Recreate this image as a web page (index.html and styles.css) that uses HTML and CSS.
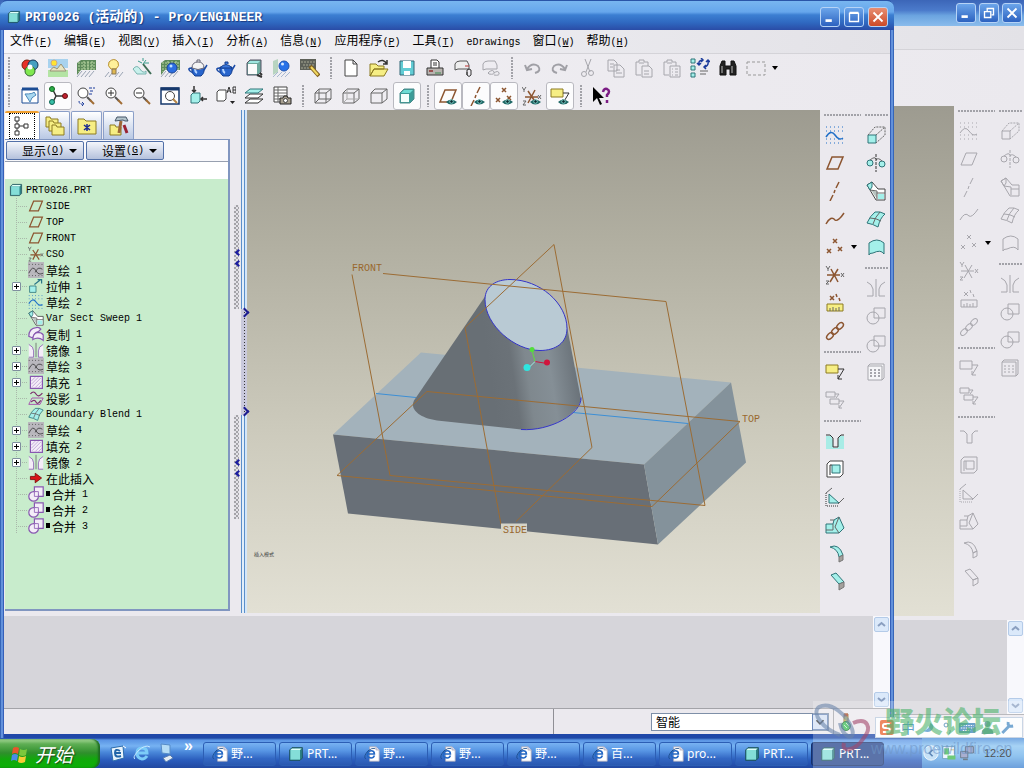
FILE: index.html
```html
<!DOCTYPE html>
<html lang="zh-CN">
<head>
  <meta charset="UTF-8">
  <title>PRT0026 (活动的) - Pro/ENGINEER</title>
  <link rel="stylesheet" href="styles.css">
</head>
<body>
  <div class="desktop">

    <section class="window back">
      <header class="titlebar">
        <button class="winbtn" aria-label="最小化"><svg viewBox="0 0 20 20"><path d="M5 14h7" stroke-width="3"/></svg></button>
        <button class="winbtn" aria-label="还原"><svg viewBox="0 0 20 20"><path d="M8 8V5h7v7h-2M5 8.500h7V15H5z" stroke-width="1.500"/></svg></button>
        <button class="winbtn" aria-label="关闭"><svg viewBox="0 0 20 20"><path d="M5 5l10 10M15 5L5 15" stroke-width="2"/></svg></button>
      </header>
      <div class="menubar"></div>
      <div class="toolbars"></div>
      <div class="main">
        <div class="canvas"></div>
        <div class="sidetools off" data-tools></div>
      </div>
      <div class="message"><div class="vscroll" data-scroll></div></div>
      <div class="status"></div>
    </section>

    <section class="window front">
      <header class="titlebar">
        <span class="appicon" data-icon="part"></span>
        <h1>PRT0026 (<span class="zh">活动的</span>) - Pro/ENGINEER</h1>
        <button class="winbtn" aria-label="最小化"><svg viewBox="0 0 20 20"><path d="M5 14h7" stroke-width="3"/></svg></button>
        <button class="winbtn" aria-label="最大化"><svg viewBox="0 0 20 20"><path d="M5 6h10v9H5z M5 5h10" stroke-width="1.500"/></svg></button>
        <button class="winbtn close" aria-label="关闭"><svg viewBox="0 0 20 20"><path d="M5 5l10 10M15 5L5 15" stroke-width="2"/></svg></button>
      </header>

      <nav class="menubar">
        <button>文件<span class="en">(<u>F</u>)</span></button>
        <button>编辑<span class="en">(<u>E</u>)</span></button>
        <button>视图<span class="en">(<u>V</u>)</span></button>
        <button>插入<span class="en">(<u>I</u>)</span></button>
        <button>分析<span class="en">(<u>A</u>)</span></button>
        <button>信息<span class="en">(<u>N</u>)</span></button>
        <button>应用程序<span class="en">(<u>P</u>)</span></button>
        <button>工具<span class="en">(<u>T</u>)</span></button>
        <button><span class="en">eDrawings</span></button>
        <button>窗口<span class="en">(<u>W</u>)</span></button>
        <button>帮助<span class="en">(<u>H</u>)</span></button>
      </nav>

      <div class="toolbars">
        <div class="toolrow" id="row1"></div>
        <div class="toolrow" id="row2"></div>
      </div>

      <div class="main">
        <aside class="sidebar">
          <div class="tabs">
            <button class="tab active" aria-label="模型树" data-icon="tree"></button>
            <button class="tab" aria-label="文件夹浏览器" data-icon="folders"></button>
            <button class="tab" aria-label="收藏夹" data-icon="favorite"></button>
            <button class="tab" aria-label="连接" data-icon="hammer"></button>
          </div>
          <div class="panel">
            <div class="panelbar">
              <button class="drop">显示<span class="en">(<u>O</u>)</span><span class="caret"></span></button>
              <button class="drop">设置<span class="en">(<u>G</u>)</span><span class="caret"></span></button>
            </div>
            <div class="treehead"></div>
            <ul class="tree" id="tree"></ul>
          </div>
        </aside>
        <div class="gutter">
          <div class="sash"><span></span><span></span></div>
          <div class="sash"><span></span><span></span></div>
        </div>
        <div class="splitter"><div class="handle"></div></div>

        <div class="canvas">
          <svg class="model" viewBox="247 110 573 502">
            <defs>
              <linearGradient id="side" gradientUnits="userSpaceOnUse" x1="490" y1="375" x2="578" y2="362">
                <stop offset="0" stop-color="#686f75"/>
                <stop offset=".26" stop-color="#6b7278"/>
                <stop offset=".42" stop-color="#7f888e"/>
                <stop offset=".68" stop-color="#858f96"/>
                <stop offset="1" stop-color="#687077"/>
              </linearGradient>
            </defs>
            <path fill="#a3b2bb" d="M333 434L421 352L731 382L644 464z"/>
            <path fill="#686f77" d="M333 434L644 464L658 544L348 513z"/>
            <path fill="#84929b" d="M644 464L731 382L746 462L658 544z"/>
            <path class="edge" d="M376 393L416 397M573 412L688 423"/>
            <path fill="url(#side)" d="M485 296L414 400C409 410 422 418 437 420L521 429C548 431 577 415 581 399L567 326z"/>
            <path class="loop" fill="#b9cad4" d="M485 299C485 285 497 279 510 279C540 279 567 303 567 328C567 342 556 350 540 350C515 350 485 325 485 299z"/>
            <path class="loop" fill="none" d="M521 429C550 431 582 413 581 397"/>
            <path class="datum" d="M383 273L666 301L705 505L390 475L352 274"/>
            <path class="datum" d="M501 524L465 327L554 244L592 447L516 521"/>
            <path class="datum" d="M337 475L427 391L740 421L652 506z"/>
            <path stroke="#5fdc3c" d="M535 361L532 350"/>
            <path stroke="#c8143c" d="M535 361L547 363"/>
            <path stroke="#9ff0e8" d="M535 361L528 368"/>
            <circle cx="532" cy="349" r="2.500" fill="#52dd3c"/>
            <circle cx="547" cy="362" r="3" fill="#d0143c"/>
            <circle cx="527" cy="367" r="3.500" fill="#2ee6e0"/>
            <path fill="#d6d4c8" d="M501 523h26v11h-26z"/>
            <text x="352" y="270">FRONT</text>
            <text x="742" y="421">TOP</text>
            <text x="503" y="532">SIDE</text>
            <text class="mode" x="254" y="555">插入模式</text>
          </svg>
        </div>
        <div class="sidetools" data-tools></div>
      </div>

      <div class="message"><div class="vscroll" data-scroll></div></div>

      <footer class="status">
        <div class="pane grow"></div>
        <div class="pane"></div>
        <div class="combo">
          <select aria-label="过滤器"><option>智能</option></select>
          <svg viewBox="0 0 16 16"><path d="M4 6l4 4l4-4"/></svg>
        </div>
        <div class="light" data-icon="light"></div>
      </footer>
    </section>

    <div class="ime">
      <svg viewBox="0 0 148 20">
        <rect x="4" y="2" width="14" height="15" rx="2" fill="#e8602c"/>
        <path d="M14 6H9q-2 0-2 2t2 2h3q2 0 2 2t-2 2H7" fill="none" stroke="#fff" stroke-width="2"/>
        <path d="M55 5q-1 7-7 8q7 3 10-3q1-3-3-5" fill="#4b94c9"/>
        <circle cx="71" cy="7" r="2" fill="none" stroke="#3d7fae"/><path d="M75 12q1 2-1 4" fill="none" stroke="#3d7fae"/>
        <rect x="84" y="5" width="17" height="10" rx="1" fill="#3b83b8"/>
        <path d="M86 7.500h13M86 10h13M88 12.500h8" stroke="#fff" stroke-dasharray="1.500 1"/>
        <circle cx="113" cy="6" r="3" fill="#4c8c93"/><path d="M107 16q0-6 6-6t6 6z" fill="#4c8c93"/>
        <path d="M128 15l7-7M134 4q-1 5 5 4" stroke="#4b8cc4" stroke-width="3" fill="none"/>
      </svg>
      <span>中</span>
    </div>
  </div>

  <div class="taskbar">
    <button class="start"><span data-icon="flag"></span>开始</button>
    <div class="quick">
      <button aria-label="Outlook Express" data-icon="mail"></button>
      <button aria-label="Internet Explorer" data-icon="ie"></button>
      <button aria-label="显示桌面" data-icon="desk"></button>
      <button class="more" aria-label="更多">»</button>
    </div>
    <div class="tasks" id="tasks"></div>
    <div class="tray">
      <button aria-label="隐藏图标" data-icon="hide"></button>
      <span data-icon="traygreen"></span>
      <span data-icon="traynet"></span>
      <time>12:20</time>
    </div>
  </div>

  <div class="watermark">
    <svg viewBox="0 0 60 60">
      <path d="M27 34C10 28-2 12 6 6C18 0 34 14 39 28C43 40 30 38 27 22" stroke="#6c86ac"/>
      <path d="M40 22C54 16 60 26 50 38C42 50 28 52 31 42" stroke="#a3476c"/>
    </svg>
    <div class="words"><b>野火论坛</b><span>www.proewildfire.cn</span></div>
  </div>

  <script src="script.js"></script>
</body>
</html>
```

FILE: styles.css
```css
:root {
  --cjk: "Noto Sans CJK SC", sans-serif;
  --mono: "Liberation Mono", "Noto Sans CJK SC", monospace;
  --face: #ebe9ee;
  --msg: #d6d5da;
}
* { box-sizing: border-box; }
html, body {
  margin: 0;
  height: 100%;
  overflow: hidden;
  font-family: var(--cjk);
  font-size: 12px;
  color: #000;
}
body {
  display: flex;
  flex-direction: column;
  position: relative;
}
button {
  border: 0;
  padding: 0;
  margin: 0;
  background: none;
  font: inherit;
  color: inherit;
}
svg { display: block; }
.en {
  font-family: var(--mono);
  font-size: 10px;
}

/* windows */
.desktop {
  flex: 1;
  position: relative;
  min-height: 0;
}
.window {
  position: absolute;
  display: flex;
  flex-direction: column;
  background: var(--face);
}
.window.back { inset: 0; }
.window.front {
  inset: 0 130px 0 0;
  padding: 0 4px 4px;
  border-radius: 7px 7px 0 0;
  background: linear-gradient(90deg, #2150a8, #78a8ec 2px, #1f48a8 4px, #1f48a8 calc(100% - 4px), #78a8ec calc(100% - 2px), #2150a8);
}
.titlebar {
  display: flex;
  align-items: center;
  gap: 4px;
  height: 30px;
  flex: none;
}
.front .titlebar {
  margin: 0 -4px;
  padding: 2px 6px 0 7px;
  border-top: 1px solid #2a55a8;
  border-radius: 7px 7px 0 0;
  background: linear-gradient(#78b6f0, #66a6ec 38%, #3c7fd2 48%, #2f68c0 75%, #2a4ca6);
}
.back .titlebar {
  height: 26px;
  padding: 0 2px 0 0;
  gap: 3px;
  justify-content: flex-end;
  background: linear-gradient(#3c66b8, #4b7bcb 40%, #6ba4e0 60%, #8abcec);
}
.titlebar h1 {
  flex: 1;
  margin: 0;
  font: bold 13px/20px var(--mono);
  color: #fff;
  text-shadow: 1px 1px 1px #1b3a80;
  white-space: pre;
}
.titlebar .zh { font: bold 14px/20px var(--cjk); }
.appicon svg { width: 14px; height: 14px; }
.winbtn {
  width: 20px;
  height: 20px;
  border: 1px solid #b6d3f6;
  border-radius: 3px;
  background: linear-gradient(#6ba5ea, #2c62c0);
}
.winbtn svg {
  width: 18px;
  height: 18px;
  fill: none;
  stroke: #fff;
}
.winbtn.close { background: linear-gradient(#e88e72, #cc4a28); }

.menubar {
  display: flex;
  height: 24px;
  flex: none;
  background: linear-gradient(90deg, #f6f6fa, #e3e2e7);
  border-bottom: 1px solid #d4d3d8;
}
.menubar button {
  padding: 0 6px;
  line-height: 20px;
  height: 20px;
}
.toolbars {
  height: 56px;
  flex: none;
  background: linear-gradient(90deg, #f1f0f4, var(--face));
}
.toolrow {
  display: flex;
  height: 28px;
}
.toolrow > .grip {
  width: 13px;
  margin: 3px 0;
  padding: 0 5px;
  background: repeating-linear-gradient(#a2a2a8 0 2px, transparent 2px 3px) center / 2px 100% no-repeat content-box;
}
.toolrow > .grip:first-child { width: 12px; padding: 0 6px 0 3px; }
.tool {
  display: flex;
  align-items: center;
  justify-content: center;
  width: 28px;
  height: 28px;
  flex: none;
}
.tool.on {
  background: #fcfcfd;
  border: 1px solid #b9b9c0;
  border-radius: 3px;
}
.caret {
  display: inline-block;
  border: 3px solid transparent;
  border-top: 4px solid #000;
  border-bottom: 0;
}
.toolrow > .caret { align-self: center; margin-left: 2px; }

/* icons */
.ico {
  width: 20px;
  height: 20px;
  fill: none;
  stroke: #666;
}
.ico .k { stroke: #333; }
.ico .g { stroke: #a6a6ac; }
.ico .b { stroke: #8c5530; stroke-width: 1.500; }
.ico .c { fill: #a4f0ea; stroke: #2f7478; }
.ico .y { fill: #f6ee84; stroke: #8c7a22; }
.ico .w { fill: #fff; stroke: #444; }
.ico .u { stroke: #1f6fc8; stroke-width: 1.500; }
.ico .p { stroke: #8858b0; fill: #f4edf8; }
.ico .f { stroke: none; }
.off .ico * {
  stroke: #a8a7ad;
  stroke-width: 1;
  fill: none;
}
.off .ico .f { stroke: none; }

/* main area */
.main {
  flex: 1;
  display: flex;
  min-height: 0;
  padding-bottom: 3px;
  background: var(--face);
}
.canvas {
  flex: 1;
  min-width: 0;
  background: linear-gradient(#9d9b90, #b0aea0 25%, #cdcbbd 65%, #e2e0d4);
}
.model {
  width: 100%;
  height: 100%;
}
.model .datum {
  fill: none;
  stroke: #9c6c34;
}
.model .edge { stroke: #3c8fd6; }
.model .loop { stroke: #3434c8; }
.model text {
  font: 10px var(--mono);
  fill: #99682e;
}
.model .mode { font: 5px var(--cjk); fill: #444; }

.sidetools {
  display: flex;
  width: 70px;
  flex: none;
  padding-left: 1px;
}
.sidetools .col {
  display: flex;
  flex-direction: column;
}
.sidetools .col:first-child { width: 41px; }
.sidetools .grip {
  height: 13px;
  margin: 0 1px 0 3px;
  padding: 6px 0 5px;
  background: repeating-linear-gradient(90deg, #a2a2a8 0 2px, transparent 2px 3px) content-box;
}
.sidetools .grip:first-child { height: 11px; padding: 4px 0 5px; }
.sidetools .cell {
  display: flex;
  align-items: center;
  height: 28px;
}
.sidetools .cell .caret { margin-left: 2px; }

/* sidebar */
.sidebar {
  display: flex;
  flex-direction: column;
  width: 226px;
  padding: 1px 0 2px 1px;
}
.tabs {
  display: flex;
  height: 28px;
}
.tab {
  display: flex;
  align-items: center;
  justify-content: center;
  width: 31px;
  margin-right: 1px;
  border: 1px solid #8b9fc8;
  border-bottom: 0;
  border-radius: 2px 2px 0 0;
  background: linear-gradient(#fff, #b9c8e4);
}
.tab.active {
  width: 34px;
  margin: 0;
  border: 0;
  border-top: 2px solid #f0a030;
  background: #fff;
}
.tab.active .ico { width: 24px; height: 24px; padding: 2px; outline: 1px dotted #000; }
.panel {
  display: flex;
  flex-direction: column;
  flex: 1;
  border: 1px solid #8196c0;
  border-width: 1px 2px 2px 0;
  background: #c8eccc;
}
.panelbar {
  display: flex;
  gap: 2px;
  height: 22px;
  padding: 1px;
  background: #f8f8fb;
  border-bottom: 1px solid #98a0b0;
}
.drop {
  display: flex;
  align-items: center;
  justify-content: flex-end;
  width: 78px;
  height: 19px;
  padding-right: 6px;
  border: 1px solid #5270a8;
  border-radius: 2px;
  background: linear-gradient(#f4f6fb, #b4c1dc);
}
.drop .caret { margin-left: 5px; border-width: 4px 4px 0; }
.treehead {
  height: 17px;
  background: #fff;
}
.tree {
  list-style: none;
  margin: 0;
  padding: 3px 0 0 4px;
}
.tree li {
  display: flex;
  align-items: center;
  height: 16px;
  line-height: 15px;
  white-space: pre;
}
.tree .en { padding-top: 1px; }
.tree .ico { width: 16px; height: 16px; margin-right: 2px; }
.tree .root .ico { width: 14px; height: 14px; margin-right: 3px; }
.branch {
  display: flex;
  align-items: center;
  width: 19px;
  height: 16px;
  padding-left: 3px;
  background:
    repeating-linear-gradient(#a9b8aa 0 1px, transparent 1px 2px) 7px 0 / 1px 100% no-repeat,
    repeating-linear-gradient(90deg, #a9b8aa 0 1px, transparent 1px 2px) 7px 8px / 11px 1px no-repeat;
}
.plus {
  width: 9px;
  height: 9px;
  border: 1px solid #7f8f9f;
  border-radius: 1px;
  background:
    linear-gradient(#000, #000) center / 5px 1px no-repeat,
    linear-gradient(#000, #000) center / 1px 5px no-repeat, #fff;
}
.dot {
  width: 4px;
  height: 5px;
  margin: 0 2px 2px 0;
  background: #000;
}
.gutter {
  display: flex;
  flex-direction: column;
  gap: 106px;
  width: 11px;
  padding: 95px 2px 0 4px;
}
.sash {
  display: flex;
  flex-direction: column;
  align-items: center;
  gap: 4px;
  height: 104px;
  padding-top: 44px;
  background: repeating-conic-gradient(#a4a3a8 0 25%, #e4e2e8 0 50%) 0 0 / 4px 4px;
}
.sash span {
  width: 5px;
  height: 5px;
  margin: 1px 0 1px 3px;
  border: solid #1c1ca0;
  border-width: 0 0 2px 2px;
  transform: rotate(45deg);
}
.splitter {
  width: 6px;
  display: flex;
  align-items: center;
  background: linear-gradient(90deg, #5b8fca 1px, #e2eefa 1px 3px, #5b8fca 3px 4px, #d4e6f8 4px);
}
.handle {
  display: flex;
  flex-direction: column;
  width: 6px;
  height: 106px;
  background: repeating-linear-gradient(#333 0 1px, transparent 1px 3px) 3px 0 / 1px 100% no-repeat, #c9c9dc;
}
.handle::before, .handle::after {
  content: "";
  width: 5px;
  height: 5px;
  border: solid #1c1c90;
  border-width: 2px 2px 0 0;
  transform: rotate(45deg);
}
.handle::before { margin-bottom: auto; }

.message {
  display: flex;
  justify-content: flex-end;
  height: 92px;
  flex: none;
  background: var(--msg);
}
.vscroll {
  display: flex;
  flex-direction: column;
  justify-content: space-between;
  width: 17px;
  padding: 1px;
  background: #f8f8fc;
}
.vscroll button {
  width: 15px;
  height: 15px;
  border: 1px solid #b4cbe8;
  border-radius: 2px;
  background: #dbe9fa;
}
.vscroll svg { width: 13px; height: 13px; fill: none; stroke: #8a9fc0; stroke-width: 2; }
.status {
  display: flex;
  align-items: center;
  height: 26px;
  flex: none;
  background: var(--face);
  border-top: 1px solid #a3a3a8;
}
.pane { width: 97px; height: 25px; }
.pane.grow { width: auto; flex: 1; border-right: 1px solid #8f8f95; }
.combo {
  display: flex;
  width: 178px;
  height: 18px;
  border: 1px solid #7e8fa8;
  background: #fff;
}
.combo select {
  flex: 1;
  appearance: none;
  border: 0;
  padding: 0 4px;
  background: #fff;
  font: 12px/16px var(--cjk);
  color: #000;
}
.combo svg { width: 16px; height: 16px; border: 1px solid #6c88b8; background: #d4e0f4; fill: none; stroke: #333; stroke-width: 2; }
.light {
  display: flex;
  align-items: center;
  width: 57px;
  height: 25px;
  margin-left: 4px;
  padding-left: 2px;
  border-left: 1px solid #a3a3a8;
}

.back .message { height: 94px; }
.back .status { height: 24px; }
.back .main { padding-bottom: 4px; }

/* input method bar */
.ime {
  position: absolute;
  right: 1px;
  bottom: 0;
  width: 148px;
  height: 21px;
  border: 1px solid #b9c8dc;
  background: #fbfcfe;
}
.ime svg { width: 146px; height: 20px; }
.ime span {
  position: absolute;
  left: 25px;
  top: 0;
  font-size: 14px;
  line-height: 18px;
  color: #2f7fb8;
}

/* taskbar */
.taskbar {
  display: flex;
  height: 30px;
  flex: none;
  background: linear-gradient(#1f4aa2, #5a94e4 2px, #76b2f2 8px, #4a88da 14px, #2a5cbc 22px, #2148a0);
  color: #fff;
}
.start {
  display: flex;
  align-items: center;
  gap: 5px;
  width: 100px;
  padding-left: 10px;
  margin-top: 1px;
  border-radius: 0 8px 8px 0;
  background: linear-gradient(#a8d898, #5fae54 5px, #2f8f2c 14px, #12a80c 20px, #0bb006);
  box-shadow: inset -2px 0 2px #1d6a24;
  font: italic 19px/28px var(--cjk);
  text-shadow: 1px 1px 1px #1c4a1c;
}
.quick {
  display: flex;
  align-items: center;
  gap: 4px;
  width: 103px;
  padding-left: 8px;
}
.quick .more {
  align-self: flex-start;
  margin-left: 4px;
  font: bold 16px/16px "Liberation Sans", sans-serif;
}
.tasks {
  display: flex;
  gap: 3px;
  flex: 1;
  padding: 4px 0 2px;
}
.task {
  display: flex;
  align-items: center;
  gap: 3px;
  width: 73px;
  padding-left: 8px;
  border: 1px solid #2c5eb4;
  border-radius: 3px;
  background: linear-gradient(#78b2f2, #5896e4 35%, #3368c4 70%, #2a58b0);
  font: 12px/22px "Noto Sans", var(--cjk);
  color: #fff;
}
.task .ico { width: 16px; height: 16px; }
.task.active { background: #24458c; border-color: #16306c; }
.tray {
  display: flex;
  align-items: center;
  gap: 2px;
  width: 102px;
  padding-left: 1px;
  background: linear-gradient(#4a8cd8, #8ac4f2 8px, #6cb0ea 18px, #3c80d0);
}
.tray .ico { width: 16px; height: 16px; }
.tray time {
  margin-left: 7px;
  font: 11px/16px "Liberation Sans", sans-serif;
  color: #111;
}

/* logo laid over the lower right corner */
.watermark {
  position: absolute;
  right: 0;
  bottom: 0;
  display: flex;
  width: 211px;
  height: 67px;
  background: rgba(255, 255, 255, .25);
  pointer-events: none;
}
.watermark svg {
  width: 60px;
  height: 60px;
  fill: none;
  stroke-width: 4;
  opacity: .6;
}
.words {
  position: relative;
  flex: 1;
}
.words b {
  display: block;
  padding-left: 12px;
  font: 900 29px/38px var(--cjk);
  color: rgba(76, 178, 106, .6);
  white-space: nowrap;
}
.words span {
  position: absolute;
  left: -2px;
  top: 38px;
  font: 16px/20px "Liberation Sans", sans-serif;
  color: rgba(110, 150, 200, .6);
}
```

FILE: script.js
```js
const eye = '<path class="f" fill="#1f6866" d="M8 16q5-5 11 0q-6 5-11 0"/><circle cx="13.500" cy="15.500" r="1.800" fill="#0a2c30" stroke="#7ecbc4"/>';
const grid = '<path class="f" fill="#5d8a5a" d="M1 5l4-3h15v10H5l-4 5z"/><path stroke="#bcd8a4" stroke-dasharray="2 1" d="M5 5h14M5 8h14M5 11h14M3 4v10M8 3v9M12 3v9M16 3v9"/><path stroke="#9aa4b4" d="M1 19l5-6M5 19l5-6M9 19l5-6M13 19l5-6"/>';
const teapot = '<path fill="#2864cc" stroke="#123c8c" d="M4 9h12q1 6-3 9H7q-4-3-3-9"/><path d="M16 12l3-5M4 10q-5 0-2 3l3 2" stroke="#1c4ca8" stroke-width="1.500"/><path stroke="#b4d4ff" stroke-width="2" d="M7 11q0 3 2 4"/>';
const lens = '<circle class="w" cx="7" cy="7" r="5"/><path stroke="#555" stroke-width="2" d="M11 11l4 4"/><path stroke="#a06c34" stroke-width="2" d="M14 14l4 4"/>';
const doc = '<path class="w" d="M4 2h8l4 4v12H4z M12 2v4h4"/>';
const clip = '<path class="g" d="M2 4h3V2h5v2h4v4M2 4v13h5M5 5h5"/>';

const ICONS = {
  part: '<path fill="#2c8084" stroke="#1c4c58" d="M2 5l3-3h13v13l-3 3H2z"/><path class="f" fill="#e0fff8" d="M3 5l2-2h12l-2 2z"/><path class="f" fill="#84ded8" d="M3 5h12v12H3z"/>',
  rgb: '<circle cx="7" cy="7" r="5" fill="#e83028" stroke="#721"/><circle cx="13" cy="7" r="5" fill="#46a0c0" stroke="#135"/><circle cx="10" cy="13" r="5" fill="#80e850" stroke="#363"/><circle class="f" cx="10" cy="9" r="2.500" fill="#fff"/>',
  scene: '<path class="f" fill="#a8d2ee" d="M0 1h20v9H0z"/><path class="f" fill="#b4e4a4" d="M0 12h20v7H0z"/><circle cx="6" cy="5" r="3" fill="#ffe430" stroke="#ca8"/><path fill="#e8e4c0" stroke="#9a9278" d="M2 13q3-6 7-2l4-5l5 7z"/>',
  grid: grid,
  bulb: '<path stroke="#9aa4b4" d="M1 19l4-5M5 19l4-5M11 19l4-5M15 19l4-5"/><path fill="#fff09a" stroke="#b89030" d="M7 11q-4-3-2-7q5-5 9 0q2 4-2 7z"/><path fill="#e0b850" stroke="#875" d="M8 11h4v5H8z"/>',
  wand: '<path fill="#c8f0ec" stroke="#7ab4b0" d="M1 11q4-5 7 0t6 2v3H5z"/><path stroke="#3c6c54" d="M11 6l8 10" stroke-width="2"/><path stroke="#3a9c8c" d="M11 6l3-4M10 5L6 3M12 5h5M11 3V0"/>',
  gridball: grid + '<circle cx="12" cy="10" r="5" fill="#2c6ee0" stroke="#1c4494"/><circle class="f" cx="11" cy="8" r="1.500" fill="#bfe0ff"/>',
  teapot1: teapot + '<path fill="#f4f4f4" stroke="#667" d="M4 10q0-6 6-6t6 6q-6 3-12 0M9 4V2h3v2"/>',
  teapot2: teapot + '<path fill="#3c78dc" stroke="#123c8c" d="M4 10q6-7 12 0zM9 6V4h3v2"/>',
  cube: '<path fill="#6ea89c" stroke="#556" d="M3 5l3-3h11v12l-3 3H3z"/><path class="f" fill="#9fe6e0" d="M4 5l2-2h10l-2 2z"/><path class="f" fill="#fbfbfb" d="M4 6h9v10H4z"/><path class="k" stroke-width="2" d="M13 17l5 2M16 15l2 2"/>',
  ball: '<path class="f" fill="#b8d4c0" d="M1 3l5-2v13l-5 3z"/><path stroke="#a8b8d0" d="M1 19l5-5M5 19l5-5M9 19l5-5M13 19l5-5"/><circle cx="12" cy="8" r="5" fill="#2872e8" stroke="#2054b0"/><circle class="f" cx="10.500" cy="6" r="1.500" fill="#d4e8ff"/>',
  probe: '<path class="f" fill="#5d6058" d="M0 1h16v11H0z"/><path stroke="#a8a894" stroke-dasharray="2 1" d="M1 4h14M3 7h11M1 10h12"/><path stroke="#82601e" stroke-width="4" d="M10 8l9 10"/><path stroke="#f0d860" stroke-width="2" d="M11 9l7 8"/>',
  newdoc: doc,
  open: '<path class="y" d="M1 6h6l2 2h6v3H5l-4 7z M5 11h14l-4 7H1z"/><path class="k" stroke-width="1.500" d="M9 4q5-4 9 2M18 2v4h-4"/>',
  save: '<path fill="#62ccd4" stroke="#367" d="M3 3h14v14H3z"/><path class="f" fill="#fff" d="M6 3h8v7H6zM7 13h6v4H7z"/>',
  print: '<path fill="#fff" stroke="#333" d="M6 10V2h6l2 2v6"/><path class="k" d="M8 5h4M8 7h4"/><path fill="#b8b4b0" stroke="#333" d="M2 10h16v7H2z"/><path stroke="#903030" stroke-width="1.500" d="M4 13h4"/><path stroke="#3c8c50" d="M10 15h6"/>',
  attach: '<path fill="#eee" stroke="#555" d="M2 12V6q1-3 5-3h7l2 4v4H5z"/><path stroke="#b33" d="M12 8h4"/><path class="k" d="M14 17V12q2-2 4 0v5q-2 3-4 0v-3"/>',
  link: '<path class="g" d="M2 12V6q1-3 5-3h7l2 4v4H5zM8 14q4-3 5 0t-5 2q-2-1 0-2M13 15q4-3 5 0t-5 2"/>',
  undo: '<path stroke="#a0a0a6" stroke-width="2" d="M3 7l2 5l5-1M5 11Q10 4 16 8q4 5-3 7"/>',
  redo: '<path stroke="#a0a0a6" stroke-width="2" d="M17 7l-2 5l-5-1M15 11Q10 4 4 8q-4 5 3 7"/>',
  cut: '<path class="g" d="M7 1l5 13M13 1L8 14"/><circle class="g" cx="6" cy="16" r="2.500"/><circle class="g" cx="13" cy="15" r="2.500"/>',
  copy: '<path class="g" d="M2 2h6l3 3v8H2zM8 7h6l4 4v8H8zM4 6h4M4 9h3M10 12h4M10 15h6"/>',
  paste: clip + '<path class="g" d="M8 8h7l3 3v8H8zM10 13h5M10 16h5"/>',
  paste2: clip + '<path class="g" d="M8 8h10v11H8zM10 11h1M13 11h3M10 14h1M13 14h3M10 17h1M13 17h3"/>',
  regen: '<path class="c" d="M1 1h4v4H1zM1 8h4v4H1zM1 15h4v4H1z"/><path stroke="#1c3c9c" stroke-width="1.500" d="M9 7q-1-5 4-5M11 0l2 2l-2 2M18 3q1 5-4 6M16 7l-2 2l2 2M7 5l2 2l2-2M16 4l2-2l2 2"/><path d="M10 13h8M10 16h6"/>',
  find: '<path fill="#222" stroke="#111" d="M2 8l2-5h3v5h6V3h3l2 5v9h-6v-6H8v6H2z"/><path stroke="#bbb" d="M4 8v7M14 8v7"/>',
  select: '<path d="M1 4h18v13H1z" stroke="#999" stroke-dasharray="3 2"/>',
  refresh: '<path fill="#fff" stroke="#1c4c94" d="M2 3h16v14H2z"/><path stroke="#1c4c94" stroke-width="3" d="M2 3h16"/><path fill="#a8d8f0" stroke="#4c88b8" d="M5 8q8 0 9-2l2 3q-5 2-6 7z"/>',
  spin: '<path class="k" d="M5 4l3 6l-3 6M8 10h9" stroke-width="1.500"/><circle cx="4" cy="3" r="2.500" fill="#2cac48" stroke="#162"/><circle cx="4" cy="16" r="2.500" fill="#38c0a8" stroke="#165"/><circle cx="17" cy="10" r="2.500" fill="#c02030" stroke="#611"/>',
  orient: lens + '<path stroke="#1c3c9c" d="M13 2h6M14 5h4M13 8h4M3 15q0 4 5 3M6 16l2 2l-2 2" stroke-dasharray="3 1"/>',
  zoomin: lens + '<path class="k" d="M4 7h6M7 4v6"/>',
  zoomout: lens + '<path class="k" d="M4 7h6"/>',
  fit: '<path fill="#fff" stroke="#16386c" stroke-width="1.500" d="M1 2h18v16H1z"/><path stroke="#16386c" stroke-width="3" d="M1 3h18"/><circle class="w" cx="10" cy="10" r="4.500"/><path stroke="#b78644" stroke-width="2" d="M13 13l4 4"/>',
  reorient: '<path class="c" d="M3 9l2-2h7v8l-2 2H3z"/><path class="k" stroke-width="1.500" d="M6 0v6M4 4l2 2l2-2M19 13h-6M15 11l-2 2l2 2"/>',
  views: '<path class="w" d="M1 6l2-2h7v9l-2 2H1z"/><path class="k" d="M11 7l2-6l2 6M12 5h2M17 1v6h3V1zM17 4h3"/><path class="f" fill="#222" d="M14 15h5l-2.500 3z"/>',
  layers: '<path fill="#fff" stroke="#333" d="M1 17l5-4h13l-5 4zM1 12l5-4h13l-5 4z"/><path class="c" d="M1 7l5-4h13l-5 4z"/>',
  viewmgr: '<path class="w" d="M2 1h13v15H2z"/><path d="M2 4h13M2 7h13M2 10h13M2 13h13M6 1v15"/><path fill="#a8a090" stroke="#222" d="M8 12h3l1-2h3l1 2h3v6H8z"/><circle class="w" cx="13.500" cy="14.500" r="2"/>',
  wire: '<path d="M2 7h11v10H2zM6 3h12v10H6zM2 7l4-4M13 7l5-4M13 17l5-4M2 17l4-4"/>',
  hidden: '<path d="M2 7h11v10H2zM2 7l4-4h12v10l-5 4M13 7l5-4"/><path stroke="#aaa" d="M6 3v10h12M2 17l4-4"/>',
  nohidden: '<path d="M2 7h11v10H2zM2 7l4-4h12v10l-5 4M13 7l5-4"/>',
  shaded: '<path fill="#3c9c98" stroke="#4c8c8c" d="M3 7l4-4h10v10l-4 4H3z"/><path class="f" fill="#6cdcd4" d="M4 7l3-3h9l-3 3z"/><path class="f" fill="#f4fffc" d="M4 8h8v8H4z"/>',
  plane: '<path class="b" d="M2 16L7 4h11l-5 12z"/>',
  axis: '<path class="b" d="M14 1l-3 6M10 9l-1 3M8 14l-3 6"/>',
  points: '<path class="b" d="M8 2l4 4M12 2L8 6M2 12l4 4M6 12l-4 4M13 10l4 4M17 10l-4 4"/>',
  csys: '<path class="b" d="M3 11h13M6 5l8 12M13 4L6 17"/><path d="M0 1l2 3l2-3M2 4v2M16 9l3 4M19 9l-3 4M1 15h3l-3 4h3"/>',
  note: '<path class="y" stroke="#555" d="M1 3h12v8H1z"/><path class="k" d="M13 7h6l-6 10M13 13v4h4"/>',
  helpq: '<path class="f" fill="#000" d="M2 1v15l4-4l3 7l2-1l-3-6h5z"/><path stroke="#7c1c84" stroke-width="2.500" d="M12 6q1-4 4-3q4 2 0 6v2M16 14v3"/>',
  tree: '<path class="k" d="M3 1h4v4H3zM3 8h4v4H3zM3 15h4v4H3zM12 8h4v4h-4zM5 5v3M5 12v3M7 10h5"/>',
  folders: '<path class="y" d="M1 1h4l1 2h7v8H1z"/><path class="y" d="M4 5h4l1 2h7v8H4z"/><path class="y" d="M7 9h4l1 2h7v8H7z"/>',
  favorite: '<path class="y" d="M1 3h6l2 2h10v13H1z"/><path stroke="#1c2c90" stroke-width="1.500" d="M10 8v7M7 9l6 5M13 9l-6 5"/>',
  hammer: '<path class="y" d="M1 9h5l1 2h5v8H1z"/><path stroke="#9c6838" stroke-width="3" d="M12 5l-2 12"/><path fill="#b4c4cc" stroke="#456" d="M6 5l2-4h9l2 4h-3l-2-1z"/><path stroke="#923" stroke-width="3" d="M15 9l3 8"/>',
  sketch: '<path stroke="#1f6fc8" stroke-dasharray="1 3" d="M1 2h18M1 6h18M1 14h18M1 18h18"/><path class="u" d="M1 12q5-8 9-2t8 3"/>',
  sketchgray: '<path class="f" fill="#b9b7bd" d="M0 0h20v20H0z"/><path class="k" stroke-dasharray="1 3" d="M1 3h18M1 17h18"/><path class="k" d="M1 14q5-11 9-3q3 6 9 3M9 13q3-8 9-4"/>',
  extrude: '<path class="c" d="M2 10h8v8H2z"/><path d="M2 10l7-8h10v8l-9 8M10 10l9-8" stroke-dasharray="2 1"/>',
  extrudesm: '<path class="c" d="M2 10h8v8H2z"/><path stroke="#2b7688" stroke-width="1.500" d="M8 8l8-6M12 2h5v5"/>',
  revolve: '<circle class="c" cx="4" cy="10" r="3"/><circle class="c" cx="16" cy="11" r="3"/><path d="M4 7q5-4 6-1M16 8q-4-4-6-1"/><path class="k" stroke-dasharray="3 1" d="M10 1v18"/>',
  varsect: '<path class="w" d="M1 4l5-3l6 7h7v11h-9z"/><path class="f" fill="#b8c4c0" d="M5 9l6 2v7z"/><path class="c" d="M1 4l5-3v5l-2 3z"/><path d="M4 9l7 1v8M11 12h8"/><path class="f" fill="#a4f0ea" d="M12 13h6v5h-6z"/>',
  blend: '<path class="c" fill="#d8fffa" d="M1 14Q4 7 9 3q5-1 10 2q-5 4-7 13q-5-3-11-4"/><path d="M4 9q6 0 11 3M14 3Q9 8 7 15"/>',
  surface: '<path class="c" d="M3 6q8-6 15 0v11q-3-5-11-1q-4 0-4 2z"/>',
  csysside: '<path class="b" d="M2 10h13M6 4l7 13M13 4L5 17"/><path d="M1 1l2 3l2-3M3 4v2M16 8l3 4M19 8l-3 4M1 16h3l-3 3h3"/>',
  curve: '<path class="b" d="M1 15q5-9 9-4q3 2 9-7"/>',
  analysis: '<path class="b" d="M5 3l4 4M9 3L5 7M11 1l1 3M14 5l1 3"/><path class="y" d="M2 11h16v7H2z"/><path d="M5 18v-3M8 18v-4M11 18v-3M14 18v-4"/>',
  chain: '<ellipse class="b" cx="5" cy="15" rx="4" ry="2.500" transform="rotate(-45 5 15)"/><ellipse class="b" cx="10" cy="10" rx="4" ry="2.500" transform="rotate(-45 10 10)"/><ellipse class="b" cx="15" cy="5" rx="4" ry="2.500" transform="rotate(-45 15 5)"/>',
  mirror: '<path class="g" d="M10 1v18M1 4q5 2 6 7v7H1M19 4q-5 2-6 7v7h6"/>',
  mirrorsm: '<path class="p" d="M1 3q6 3 6 8v8H1M19 3q-6 3-6 8v8h6"/><path d="M10 1v18"/>',
  merge: '<path class="g" d="M8 2h11v10H8z"/><circle class="g" cx="7" cy="12" r="6"/>',
  mergesm: '<path class="p" stroke-width="1.500" d="M8 1h11v12H8z"/><circle class="p" stroke-width="1.500" cx="7" cy="13" r="6"/><path class="p" d="M8 7h5v6H8z"/>',
  pattern: '<path class="g" fill="#f6f6f8" d="M2 4l2-2h14v14l-2 2H2zM16 4v14M2 4h14"/><path class="g" stroke-width="2" stroke-dasharray="2 2" d="M4 8h10M4 11h10M4 14h10"/>',
  notes: '<path class="g" d="M1 2h9v5H1zM5 9h9v5H5zM10 4h4l-3 4M14 11h5l-5 7M14 15v3h3"/>',
  hole: '<path class="f" fill="#a8ece6" d="M1 5h5l2 4v8h5V9l2-4h4v13H1z"/><path class="k" d="M1 4h4l3 3v9h5V7l3-3h3"/>',
  shell: '<path class="w" d="M2 5l3-3h13v13l-3 3H2z"/><path class="c" d="M7 6h8v8H7z"/><path class="k" d="M5 16V6h2"/>',
  rib: '<path class="c" d="M4 7l10 9H4z"/><path d="M1 6l6-5M13 17l6-6"/><path class="k" stroke-dasharray="1 1" d="M1 6v13h12"/>',
  draft: '<path class="c" d="M9 5l5-3l5 11l-5 5H1V9h7z"/><path d="M14 2l-4 10l4 6M8 9v6H1M9 5H5"/>',
  round: '<path class="c" d="M5 4q9-4 13 8l-4 2q-1-8-9-10"/><path fill="#a4a09c" stroke="#777" d="M14 14l4-2v5l-4 2z"/>',
  chamfer: '<path class="c" d="M6 4l5-2l8 9l-5 2z"/><path fill="#a4a09c" stroke="#777" d="M14 13l5-2v5l-5 3z"/>',
  copysm: '<path class="p" stroke-width="1.500" d="M1 13q0-10 9-11q4-1 6 2l-3 3q-5 1-7 8z"/><path class="p" stroke-width="1.500" d="M6 17q0-8 6-9q5 0 7 3v7q-6-5-13-1z"/>',
  fill: '<path class="p" stroke-width="1.500" d="M3 3h15v15H3z"/><path stroke="#b89ad0" d="M4 9l5-5M4 13l9-9M5 16L16 5M9 17l8-8M13 17l4-4"/>',
  project: '<path stroke="#7c2c6c" stroke-width="1.500" d="M3 5q4-5 7 0t8-1M4 15q4-4 6 0t6-2"/><path stroke="#a038a8" d="M1 18l4-8h14l-4 8z"/>',
  insert: '<path fill="#d81418" stroke="#700" d="M3 8h6V4l8 6l-8 6v-4H3z"/>',
  light: '<path stroke="#8c6a28" fill="#f0e040" d="M8 2h4v8H8z"/><path stroke="#a84828" stroke-width="3" d="M8 3h4"/><circle cx="10" cy="14" r="4.500" fill="#3cbc58" stroke="#1c7434"/><path stroke="#b8f0c0" d="M8 13l3 3M10 11l3 3"/>',
  flag: '<path class="f" fill="#e8562c" d="M3 4q3-2 6 0L8 10q-3-2-6 0z"/><path class="f" fill="#7cc83c" d="M10 5q4 2 7 0l-1 6q-3 2-7 0z"/><path class="f" fill="#4a8ce8" d="M2 11q3-2 6 0l-1 6q-3-2-6 0z"/><path class="f" fill="#f8cc34" d="M9 12q3 2 7 0l-1 6q-4 2-7 0z"/>',
  mail: '<path fill="#e8f4fc" stroke="#2c6cac" d="M3 5l12-2l1 12l-11 3z"/><path stroke="#2064a8" stroke-width="2" d="M12 8q-5-3-5 2t6 3M8 10h5"/><path stroke="#fff" d="M15 3l3 2"/>',
  ie: '<path stroke="#7cccf8" stroke-width="3" d="M5 10h10q0-5-5-5t-5 5t5 6q3 0 5-3"/><path stroke="#c8e8ff" d="M3 16Q0 15 6 8q7-7 12-4"/>',
  desk: '<path fill="#b4dcf6" stroke="#568cc8" d="M5 1l9 1v9l-8-1z"/><path fill="#e4ecf4" stroke="#567cb0" d="M7 15l7-3l3 3l-7 4z"/>',
  page: '<path fill="#fff" stroke="#aab" d="M7 1h8l4 4v14H7z"/><path fill="#dde" stroke="#aab" d="M15 1v4h4"/><path stroke="#2468c4" stroke-width="2" d="M4 10h9q0-4-4-4t-5 4t5 5q3 0 4-3"/><path stroke="#164884" d="M2 16Q-1 13 5 6q5-4 9-3"/>',
  hide: '<circle cx="10" cy="10" r="9" fill="#b4d8f4" stroke="#fff"/><path stroke="#245c9c" stroke-width="2" d="M12 6l-4 4l4 4"/>',
  traygreen: '<path fill="#eaf4ff" stroke="#3b79a0" d="M2 2h15v15H2z"/><path class="f" fill="#3cb84c" d="M4 4h6v8H4zM8 13h10v5H8z"/><path stroke="#c8a030" d="M12 6h5"/>',
  traynet: '<path fill="#8c94c0" stroke="#345" d="M8 2h10v8H8zM2 8h9v8H2z"/><path stroke="#456" stroke-width="2" d="M5 18h6"/>'
};
ICONS.planeeye = ICONS.plane + eye;
ICONS.axiseye = ICONS.axis + eye;
ICONS.pointseye = ICONS.points + eye;
ICONS.csyseye = ICONS.csys + eye;
ICONS.noteeye = ICONS.note + eye;

function icon(name) {
  return `<svg class="ico" viewBox="0 0 20 20">${ICONS[name]}</svg>`;
}

// "|" is a grip, a trailing "*" marks a pressed button, "v" is a menu arrow
function tools(list) {
  return list.split(' ').map(n => {
    if (n === '|') return '<span class="grip"></span>';
    if (n === 'v') return '<span class="caret"></span>';
    const on = n.endsWith('*');
    const key = n.replace('*', '');
    return `<button class="tool${on ? ' on' : ''}" aria-label="${key}">${icon(key)}</button>`;
  }).join('');
}

document.getElementById('row1').innerHTML = tools('| rgb scene grid bulb wand gridball teapot1 teapot2 cube ball probe | newdoc open save print attach link | undo redo cut copy paste paste2 regen find select v');
document.getElementById('row2').innerHTML = tools('| refresh spin* orient zoomin zoomout fit reorient views layers viewmgr | wire hidden nohidden shaded* | planeeye* axiseye* pointseye* csyseye noteeye* | helpq');

function column(list) {
  return '<div class="col">' + list.split(' ').map(n => {
    if (n === '|') return tools(n);
    return `<div class="cell">${tools(n)}${n === 'points' ? tools('v') : ''}</div>`;
  }).join('') + '</div>';
}
document.querySelectorAll('[data-tools]').forEach(el => {
  el.innerHTML =
    column('| sketch plane axis curve points csysside analysis chain | note notes | hole shell rib draft round chamfer') +
    column('| extrude revolve varsect blend surface | mirror merge merge pattern');
});

document.querySelectorAll('[data-icon]').forEach(el => {
  el.insertAdjacentHTML('afterbegin', icon(el.dataset.icon));
});

document.querySelectorAll('[data-scroll]').forEach(el => {
  el.innerHTML = '<button aria-label="上"><svg viewBox="0 0 13 13"><path d="M3 8l3.500-3L10 8"/></svg></button>' +
    '<button aria-label="下"><svg viewBox="0 0 13 13"><path d="M3 5l3.500 3L10 5"/></svg></button>';
});

// icon, chinese part, latin part, expandable, suppressed mark
const rows = [
  ['plane', '', 'SIDE'], ['plane', '', 'TOP'], ['plane', '', 'FRONT'], ['csys', '', 'CSO'],
  ['sketchgray', '草绘', ' 1'], ['extrudesm', '拉伸', ' 1', true], ['sketch', '草绘', ' 2'],
  ['varsect', '', 'Var Sect Sweep 1'], ['copysm', '复制', ' 1'], ['mirrorsm', '镜像', ' 1', true],
  ['sketchgray', '草绘', ' 3', true], ['fill', '填充', ' 1', true], ['project', '投影', ' 1'],
  ['blend', '', 'Boundary Blend 1'], ['sketchgray', '草绘', ' 4', true], ['fill', '填充', ' 2', true],
  ['mirrorsm', '镜像', ' 2', true], ['insert', '在此插入', ''],
  ['mergesm', '合并', ' 1', false, true], ['mergesm', '合并', ' 2', false, true], ['mergesm', '合并', ' 3', false, true]
];
document.getElementById('tree').innerHTML =
  `<li class="root">${icon('part')}<span class="en">PRT0026.PRT</span></li>` +
  rows.map(([ic, zh, en, plus, dot]) =>
    `<li><span class="branch">${plus ? '<i class="plus"></i>' : ''}</span>${icon(ic)}${dot ? '<i class="dot"></i>' : ''}${zh}<span class="en">${en}</span></li>`
  ).join('');

const tasks = [['page', '野...'], ['part', 'PRT...'], ['page', '野...'], ['page', '野...'], ['page', '野...'],
  ['page', '百...'], ['page', 'pro...'], ['part', 'PRT...'], ['part', 'PRT...', true]];
document.getElementById('tasks').innerHTML = tasks.map(([ic, text, active]) =>
  `<button class="task${active ? ' active' : ''}">${icon(ic)}${text}</button>`).join('');
```
